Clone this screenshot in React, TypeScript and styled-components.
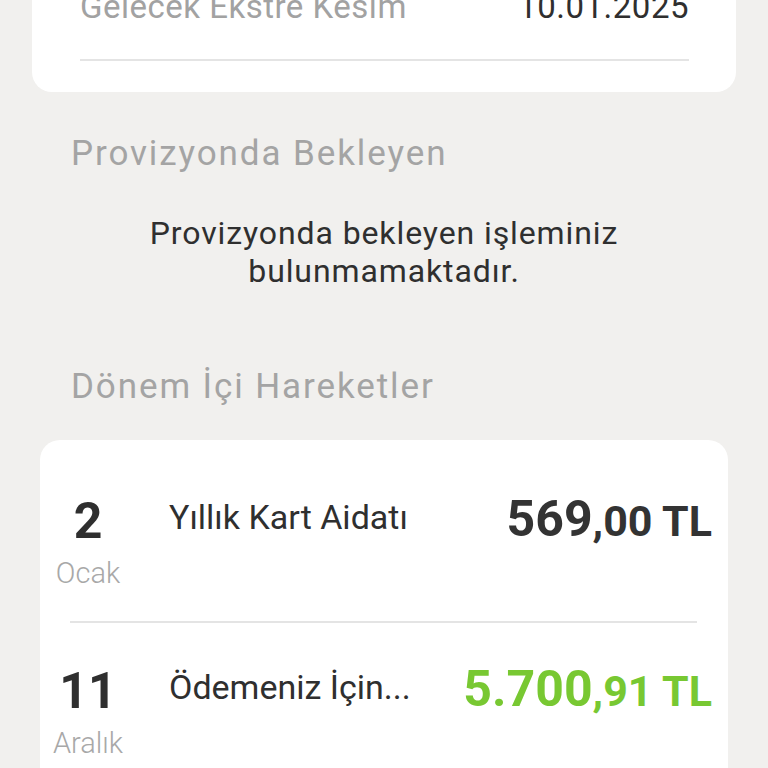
import React from "react";
import styled, { createGlobalStyle } from "styled-components";

const GlobalStyle = createGlobalStyle`
  html, body {
    margin: 0;
    padding: 0;
    background: #f1f0ee;
  }
  body {
    font-family: Roboto, "Noto Sans", sans-serif;
    -webkit-font-smoothing: antialiased;
  }
`;

const Page = styled.div`
  width: 768px;
  height: 768px;
  overflow: hidden;
  background: #f1f0ee;
`;

const SummaryCard = styled.div`
  margin: -13px 32px 0;
  padding: 0 47px 31px 48px;
  background: #ffffff;
  border-radius: 0 0 20px 20px;
`;

const SummaryRow = styled.div`
  display: flex;
  justify-content: space-between;
  align-items: baseline;
  height: 40px;
  line-height: 40px;
  font-size: 33px;
  letter-spacing: 0.5px;
`;

const SummaryLabel = styled.span`
  color: #a2a2a2;
`;

const SummaryValue = styled.span`
  color: #2f2f2f;
`;

const Divider = styled.div`
  height: 2px;
  background: #e4e4e4;
`;

const SummaryDivider = styled(Divider)`
  margin-top: 32px;
`;

const RowDivider = styled(Divider)`
  margin: 0 15px 0 22px;
`;

const SectionTitle = styled.h2<{ gapTop: number }>`
  margin: ${({ gapTop }) => gapTop}px 0 0 71px;
  font-size: 35px;
  line-height: 40px;
  letter-spacing: 1.9px;
  font-weight: 400;
  color: #a4a4a4;
`;

const EmptyMessage = styled.p`
  margin: 40px 0 0;
  text-align: center;
  font-size: 32px;
  line-height: 38px;
  letter-spacing: 0.9px;
  color: #2f2f2f;
`;

const TransactionCard = styled.div`
  margin: 33px 40px 0;
  padding: 13px 16px 0 8px;
  background: #ffffff;
  border-radius: 20px;
`;

const TransactionRow = styled.div`
  display: flex;
  align-items: flex-start;
  padding: 40px 0 30px;
`;

const DateBlock = styled.div`
  width: 80px;
  display: flex;
  flex-direction: column;
  align-items: center;
  flex-shrink: 0;
`;

const Day = styled.span`
  font-size: 50px;
  line-height: 56px;
  font-weight: 700;
  color: #2f2f2f;
`;

const Month = styled.span`
  margin-top: 6px;
  font-size: 29px;
  line-height: 36px;
  font-weight: 300;
  color: #a8a8a8;
`;

const Title = styled.div`
  flex: 1;
  margin: 4px 0 0 41px;
  font-size: 34px;
  line-height: 40px;
  color: #2f2f2f;
  white-space: nowrap;
`;

const Amount = styled.div<{ positive?: boolean }>`
  margin-top: -2px;
  line-height: 56px;
  font-weight: 700;
  white-space: nowrap;
  color: ${({ positive }) => (positive ? "#78c832" : "#333333")};
`;

const AmountMain = styled.span`
  font-size: 50px;
`;

const AmountRest = styled.span`
  font-size: 43px;
`;

type Transaction = {
  day: string;
  month: string;
  title: string;
  main: string;
  rest: string;
  positive?: boolean;
};

const transactions: Transaction[] = [
  { day: "2", month: "Ocak", title: "Yıllık Kart Aidatı", main: "569", rest: ",00 TL" },
  { day: "11", month: "Aralık", title: "Ödemeniz İçin...", main: "5.700", rest: ",91 TL", positive: true },
];

export default function App() {
  return (
    <Page>
      <GlobalStyle />
      <SummaryCard>
        <SummaryRow>
          <SummaryLabel>Gelecek Ekstre Kesim</SummaryLabel>
          <SummaryValue>10.01.2025</SummaryValue>
        </SummaryRow>
        <SummaryDivider />
      </SummaryCard>

      <SectionTitle gapTop={42}>Provizyonda Bekleyen</SectionTitle>
      <EmptyMessage>
        Provizyonda bekleyen işleminiz
        <br />
        bulunmamaktadır.
      </EmptyMessage>

      <SectionTitle gapTop={77}>Dönem İçi Hareketler</SectionTitle>
      <TransactionCard>
        {transactions.map((tx, i) => (
          <React.Fragment key={tx.day + tx.month}>
            {i > 0 && <RowDivider />}
            <TransactionRow>
              <DateBlock>
                <Day>{tx.day}</Day>
                <Month>{tx.month}</Month>
              </DateBlock>
              <Title>{tx.title}</Title>
              <Amount positive={tx.positive}>
                <AmountMain>{tx.main}</AmountMain>
                <AmountRest>{tx.rest}</AmountRest>
              </Amount>
            </TransactionRow>
          </React.Fragment>
        ))}
      </TransactionCard>
    </Page>
  );
}
